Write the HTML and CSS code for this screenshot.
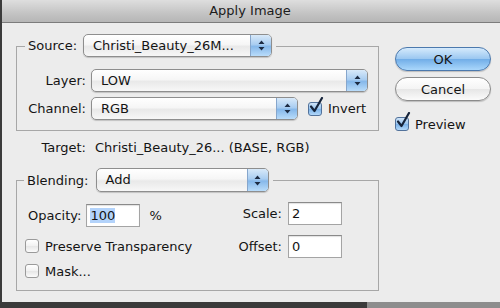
FILE: index.html
```html
<!DOCTYPE html>
<html lang="en">
<head>
    <meta charset="UTF-8">
    <title>Apply Image</title>
    <link rel="stylesheet" href="styles.css">
</head>
<body>
    <div class="window">
        <div class="titlebar">Apply Image</div>

        <div class="content">
            <div class="left-col">
                <div class="group source-group">
                    <div class="group-head">
                        <span class="label">Source:</span>
                        <div class="popup source-popup">
                            <span class="popup-text">Christi_Beauty_26M...</span>
                            <span class="popup-arrows">
                                <svg width="7" height="11" viewBox="0 0 7 11"><path d="M3.5 0.5 L6.5 4 L0.5 4 Z M3.5 10.5 L6.5 7 L0.5 7 Z" fill="#1d2c44"/></svg>
                            </span>
                        </div>
                    </div>

                    <div class="row">
                        <span class="row-label">Layer:</span>
                        <div class="popup layer-popup">
                            <span class="popup-text">LOW</span>
                            <span class="popup-arrows">
                                <svg width="7" height="11" viewBox="0 0 7 11"><path d="M3.5 0.5 L6.5 4 L0.5 4 Z M3.5 10.5 L6.5 7 L0.5 7 Z" fill="#1d2c44"/></svg>
                            </span>
                        </div>
                    </div>

                    <div class="row channel-row">
                        <span class="row-label">Channel:</span>
                        <div class="popup channel-popup">
                            <span class="popup-text">RGB</span>
                            <span class="popup-arrows">
                                <svg width="7" height="11" viewBox="0 0 7 11"><path d="M3.5 0.5 L6.5 4 L0.5 4 Z M3.5 10.5 L6.5 7 L0.5 7 Z" fill="#1d2c44"/></svg>
                            </span>
                        </div>
                        <label class="check invert-check">
                            <span class="box checked">
                                <svg width="16" height="18" viewBox="0 0 16 18"><path d="M3 9.5 L6.5 14 L14 1" fill="none" stroke="#16243b" stroke-width="2.2" stroke-linecap="round" stroke-linejoin="round"/></svg>
                            </span>
                            Invert
                        </label>
                    </div>
                </div>

                <div class="target-row">
                    <span class="row-label">Target:</span>
                    <span class="target-value">Christi_Beauty_26... (BASE, RGB)</span>
                </div>

                <div class="group blend-group">
                    <div class="group-head">
                        <span class="label">Blending:</span>
                        <div class="popup blend-popup">
                            <span class="popup-text">Add</span>
                            <span class="popup-arrows">
                                <svg width="7" height="11" viewBox="0 0 7 11"><path d="M3.5 0.5 L6.5 4 L0.5 4 Z M3.5 10.5 L6.5 7 L0.5 7 Z" fill="#1d2c44"/></svg>
                            </span>
                        </div>
                    </div>

                    <div class="blend-body">
                        <div class="blend-left">
                            <div class="opacity-row">
                                <span>Opacity:</span>
                                <div class="field opacity-field"><span class="selected">100</span></div>
                                <span class="percent">%</span>
                            </div>
                            <label class="check preserve-check">
                                <span class="box"></span>
                                Preserve Transparency
                            </label>
                            <label class="check mask-check">
                                <span class="box"></span>
                                Mask...
                            </label>
                        </div>
                        <div class="blend-right">
                            <div class="num-row">
                                <span class="num-label">Scale:</span>
                                <div class="field">2</div>
                            </div>
                            <div class="num-row">
                                <span class="num-label">Offset:</span>
                                <div class="field">0</div>
                            </div>
                        </div>
                    </div>
                </div>
            </div>

            <div class="right-col">
                <button class="btn btn-default">OK</button>
                <button class="btn">Cancel</button>
                <label class="check preview-check">
                    <span class="box checked">
                        <svg width="16" height="18" viewBox="0 0 16 18"><path d="M3 9.5 L6.5 14 L14 1" fill="none" stroke="#16243b" stroke-width="2.2" stroke-linecap="round" stroke-linejoin="round"/></svg>
                    </span>
                    Preview
                </label>
            </div>
        </div>
    </div>
</body>
</html>
```

FILE: styles.css
```css
:root {
    --dialog-bg: #ececec;
    --line: #a7a7a7;
    --text: #141414;
}

* {
    margin: 0;
    padding: 0;
    box-sizing: border-box;
}

body {
    width: 500px;
    height: 308px;
    overflow: hidden;
    background: linear-gradient(to right, #3b3b3b 0, #3b3b3b 367px, #8d8d8d 367px);
    font-family: 'DejaVu Sans', 'Liberation Sans', sans-serif;
    font-size: 13px;
    color: var(--text);
}

.window {
    margin-left: 2px;
    height: 302px;
    background-color: var(--dialog-bg);
}

.titlebar {
    height: 23px;
    line-height: 22px;
    text-align: center;
    padding-right: 2px;
    color: #1c1c1c;
    background: linear-gradient(#dedede, #c4c4c4 60%, #b6b6b6);
    border-bottom: 1px solid #7c7c7c;
}

.content {
    display: flex;
    padding: 23px 0 0 14px;
}

.left-col {
    width: 363px;
}

/* group boxes */
.group {
    border: 1px solid var(--line);
}

.group-head {
    display: flex;
    align-items: center;
    width: fit-content;
    height: 23px;
    padding: 0 4px 0 3px;
    margin: -13px 0 0 8px;
    background-color: var(--dialog-bg);
}

.source-group .group-head {
    gap: 6px;
}

.blend-group {
    margin-top: 23px;
}

.blend-group .group-head {
    gap: 7px;
    margin-left: 7px;
    margin-top: -13px;
    height: 24px;
}

/* popups */
.popup {
    display: flex;
    height: 23px;
    border: 1px solid #8e8e8e;
    border-radius: 5px;
    background: linear-gradient(#ffffff, #f6f6f6 45%, #e9e9e9 55%, #f7f7f7);
    box-shadow: 0 1px 1px rgba(0, 0, 0, 0.18);
    overflow: hidden;
}

.popup-text {
    flex: 1;
    padding-left: 9px;
    line-height: 21px;
    white-space: nowrap;
}

.popup-arrows {
    width: 21px;
    display: flex;
    align-items: center;
    justify-content: center;
    border-left: 1px solid #86a6cc;
    background: linear-gradient(#d8e9f9, #a9cdf1 45%, #86b8ea 55%, #b9dcfa);
}

.source-popup { width: 189px; }
.layer-popup { width: 277px; }
.channel-popup { width: 207px; }
.blend-popup { width: 173px; height: 24px; }

/* rows */
.row {
    display: flex;
    align-items: center;
    gap: 5px;
    height: 23px;
    margin-top: 12px;
}

.channel-row {
    margin-top: 5px;
    margin-bottom: 10px;
}

.row-label {
    width: 69px;
    text-align: right;
}

.invert-check {
    margin-left: 5px;
}

.target-row {
    display: flex;
    gap: 9px;
    height: 18px;
    line-height: 18px;
    margin-top: 8px;
    padding-left: 1px;
}

/* checkboxes */
.check {
    display: flex;
    align-items: center;
    gap: 6px;
    height: 18px;
}

.box {
    position: relative;
    width: 14px;
    height: 14px;
    border: 1px solid #9a9a9a;
    border-radius: 3px;
    background: linear-gradient(#ffffff, #f1f1f1 50%, #e6e6e6 51%, #fbfbfb);
}

.box.checked {
    border-color: #52729b;
    background: linear-gradient(#cfe4f8, #98c4ef 50%, #7ab1e8 51%, #b2d8fa);
}

.box svg {
    position: absolute;
    left: -1px;
    top: -6px;
}

/* blending body */
.blend-body {
    display: flex;
    margin-top: 11px;
    padding: 0 0 10px 8px;
}

.blend-left {
    width: 201px;
}

.opacity-row {
    display: flex;
    align-items: center;
    height: 24px;
    padding-left: 3px;
}

.opacity-field {
    margin-left: 5px;
    width: 55px;
    height: 24px;
}

.percent {
    margin-left: 9px;
}

.selected {
    background-color: #b3d3fb;
}

.field {
    width: 54px;
    height: 23px;
    padding-left: 3px;
    line-height: 21px;
    border: 1px solid #a4a4a4;
    border-top-color: #8a8a8a;
    background-color: #ffffff;
    box-shadow: inset 0 1px 1px rgba(0, 0, 0, 0.12);
}

.preserve-check {
    margin-top: 10px;
}

.mask-check {
    margin-top: 7px;
}

.blend-right {
    display: flex;
    flex-direction: column;
    gap: 10px;
    margin-top: -1px;
}

.num-row {
    display: flex;
    align-items: center;
    gap: 6px;
}

.num-label {
    width: 56px;
    text-align: right;
}

/* buttons */
.right-col {
    display: flex;
    flex-direction: column;
    padding: 1px 0 0 16px;
}

.btn {
    width: 96px;
    height: 24px;
    margin-bottom: 6px;
    border: 1px solid #8b8b8b;
    border-radius: 12px;
    font-family: inherit;
    font-size: 13px;
    color: var(--text);
    background: linear-gradient(#ffffff, #f4f4f4 50%, #e6e6e6 51%, #fbfbfb);
    box-shadow: 0 1px 1px rgba(0, 0, 0, 0.2);
}

.btn-default {
    border-color: #4c79ad;
    background: linear-gradient(#d5eafc, #9cc8f1 48%, #72aee8 52%, #aad7fb);
}

.preview-check {
    margin-top: 8px;
    gap: 6px;
}
```
